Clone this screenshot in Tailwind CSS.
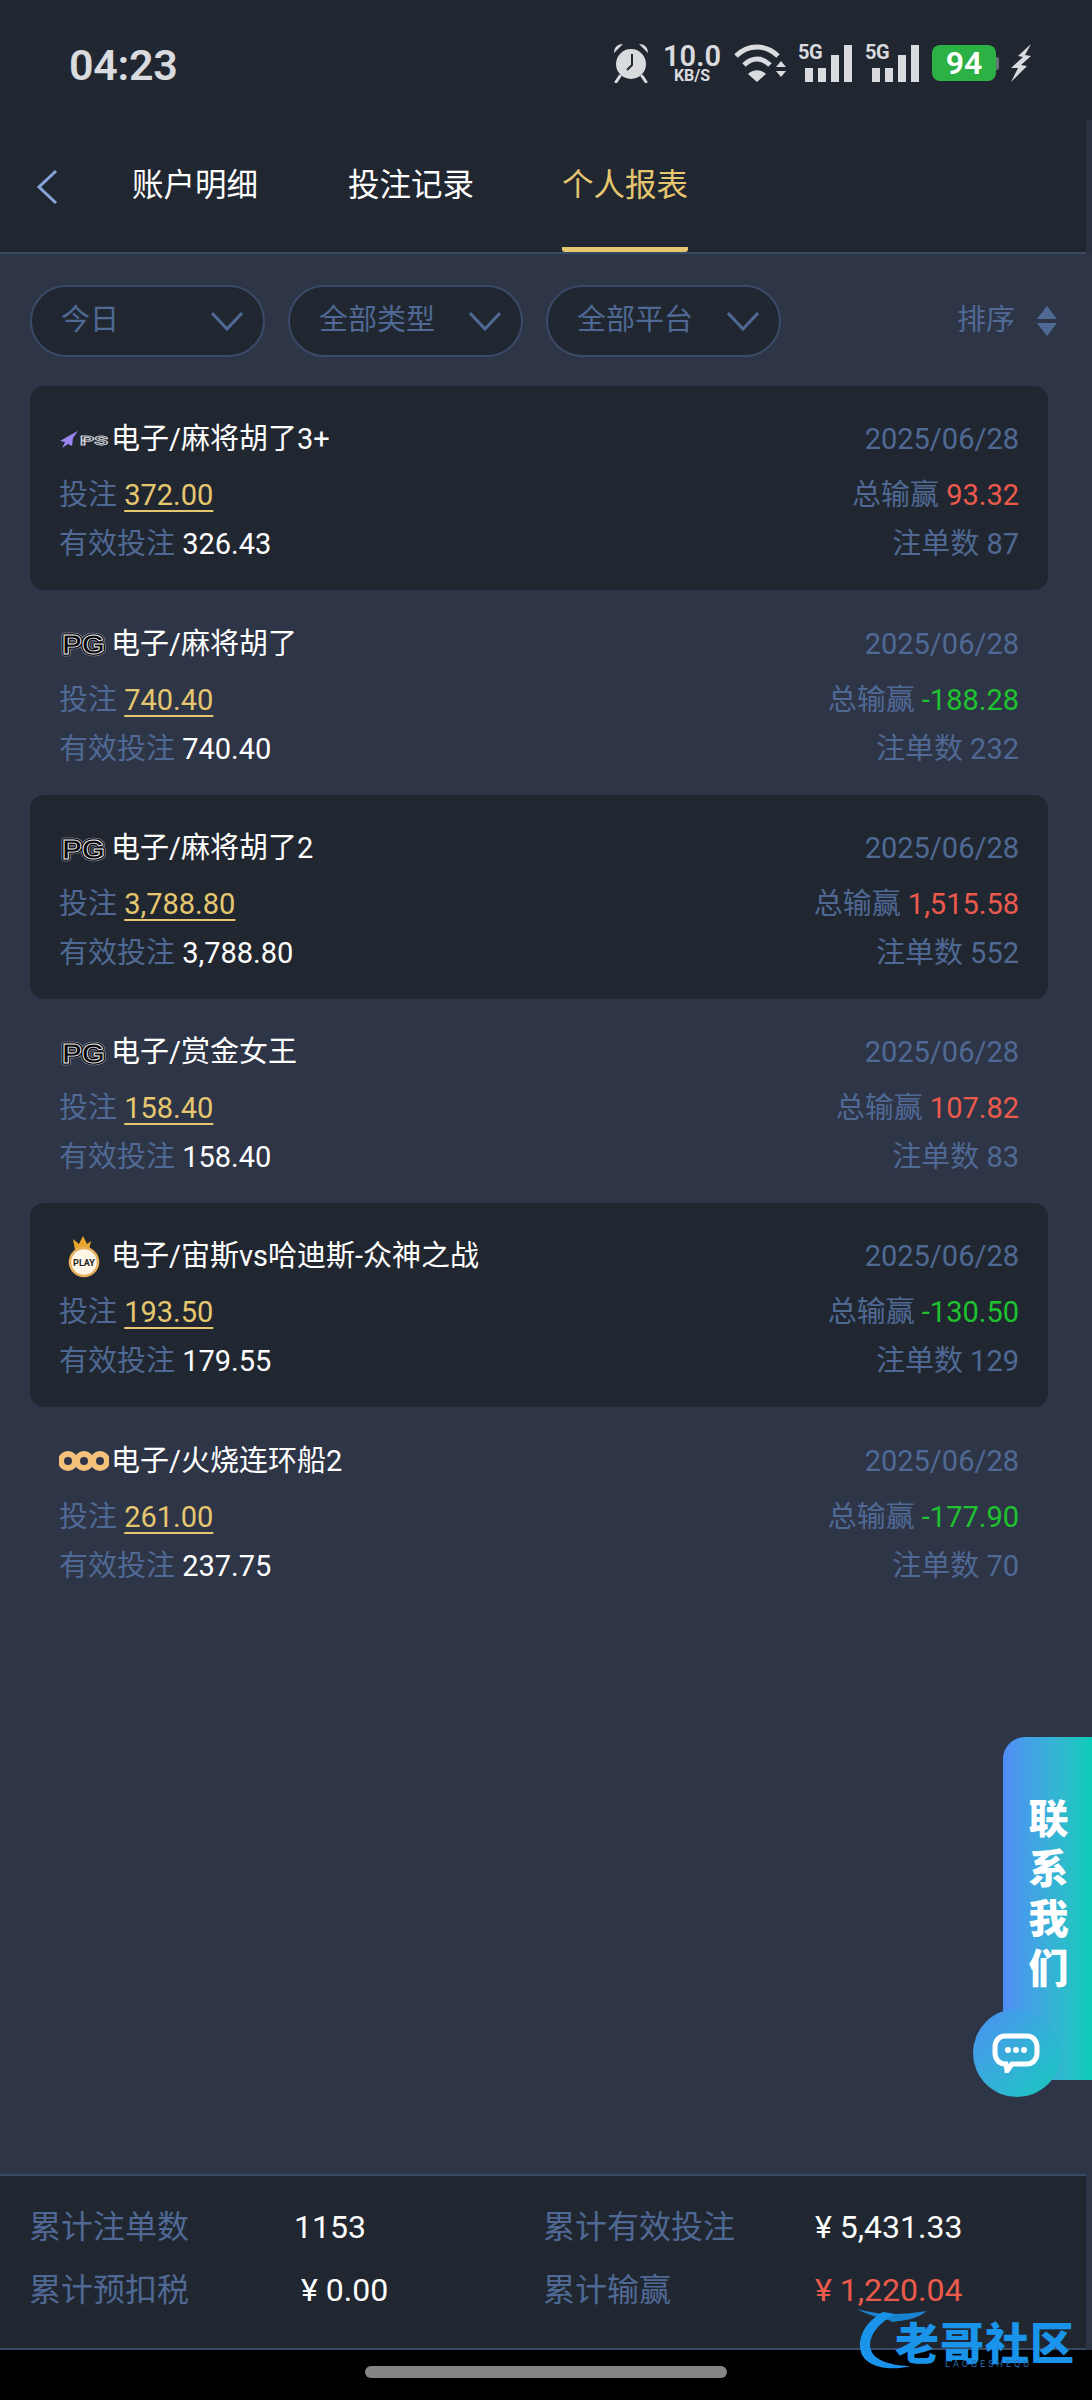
<!DOCTYPE html>
<html lang="zh-CN">
<head>
<meta charset="UTF-8">
<meta name="viewport" content="width=device-width, initial-scale=1.0">
<title>个人报表</title>
<script src="https://cdn.jsdelivr.net/npm/@tailwindcss/browser@4"></script>
</head>
<body class="bg-black">
<svg class="absolute w-0 h-0">
  <defs>
    <text id="pgmark" x="3" y="23" font-size="28" font-weight="700" font-family="Liberation Sans" textLength="43" lengthAdjust="spacingAndGlyphs">PG</text>
    <g id="pglogo">
      <use href="#pgmark" fill="none" stroke="#a4a8bc" stroke-width="4.5" stroke-linejoin="round"/>
      <use href="#pgmark" fill="none" stroke="#08080a" stroke-width="3.5" stroke-linejoin="round"/>
      <use href="#pgmark" fill="#08080a" stroke="#f4f4f8" stroke-width="0.9"/>
    </g>
  </defs>
</svg>
<div class="relative w-[1092px] h-[2400px] flex flex-col overflow-hidden bg-[#2e3547] font-[Roboto,'Noto_Sans_CJK_SC',sans-serif] text-white">

  <!-- status bar + tabs -->
  <header class="h-[254px] shrink-0 bg-[#2b3140]">
    <div class="h-[120px] bg-[#212731] flex items-start pt-[43px] pl-[69px] pr-[60px] text-[#d9dbde]">
      <span class="text-[43px] leading-[44px] font-semibold tracking-[-0.3px]">04:23</span>
      <div class="ml-auto flex items-center">
        <svg class="w-[38px] h-[40px]" viewBox="0 0 38 40" fill="#d9dbde">
          <path d="M2 10 C2 4 6 1 11 1 L3 9Z M36 10 C36 4 32 1 27 1 L35 9Z"/>
          <circle cx="19" cy="21" r="15"/>
          <path d="M8 33 L4 39 M30 33 L34 39" stroke="#d9dbde" stroke-width="3" stroke-linecap="round"/>
          <path d="M20 11 L20 22 L15 27" fill="none" stroke="#212732" stroke-width="2"/>
        </svg>
        <div class="ml-[14px] w-[56px] flex flex-col items-center">
          <span class="text-[29px] leading-[25px] font-semibold">10.0</span>
          <span class="text-[16px] leading-[14px] font-bold">KB/S</span>
        </div>
        <svg class="ml-[14px] w-[52px] h-[40px]" viewBox="0 0 52 40" fill="none" stroke="#d9dbde" stroke-width="5">
          <path d="M2 13 C14 1 32 1 44 13"/>
          <path d="M10 22 C18 14 28 14 36 22"/>
          <path d="M14 31 L23 39 L32 31 C27 26 19 26 14 31Z" fill="#d9dbde" stroke="none"/>
          <path d="M42 24 L47 18 L52 24Z M42 28 L52 28 L47 34Z" fill="#d9dbde" stroke="none"/>
        </svg>
        <div class="ml-[12px] relative w-[54px] h-[38px]">
          <span class="absolute left-0 top-[-2px] text-[20px] leading-[20px] font-bold tracking-[-0.5px]">5G</span>
          <div class="absolute left-[7px] bottom-0 flex items-end gap-[5px]">
            <i class="block w-[8px] h-[14px] bg-[#d9dbde]"></i><i class="block w-[8px] h-[14px] bg-[#d9dbde]"></i><i class="block w-[8px] h-[27px] bg-[#d9dbde]"></i><i class="block w-[8px] h-[37px] bg-[#d9dbde]"></i>
          </div>
        </div>
        <div class="ml-[13px] relative w-[54px] h-[38px]">
          <span class="absolute left-0 top-[-2px] text-[20px] leading-[20px] font-bold tracking-[-0.5px]">5G</span>
          <div class="absolute left-[7px] bottom-0 flex items-end gap-[5px]">
            <i class="block w-[8px] h-[14px] bg-[#d9dbde]"></i><i class="block w-[8px] h-[14px] bg-[#d9dbde]"></i><i class="block w-[8px] h-[27px] bg-[#d9dbde]"></i><i class="block w-[8px] h-[37px] bg-[#d9dbde]"></i>
          </div>
        </div>
        <div class="ml-[13px] flex items-center">
          <div class="w-[64px] h-[36px] rounded-[8px] bg-[#2bb144] flex items-center justify-center text-[32px] font-semibold text-white leading-none">94</div>
          <i class="block w-[3px] h-[13px] bg-[#6b7078] rounded-r-[2px]"></i>
        </div>
        <svg class="ml-[11px] w-[22px] h-[38px]" viewBox="0 0 22 38" fill="#d9dbde">
          <path d="M21 0 L8 12 L13 13 L1 24 L8 24 L1 38 L17 22 L11 21 L21 12 L15 11Z"/>
        </svg>
      </div>
    </div>
    <nav class="relative h-[134px] mr-[6px] bg-[#212731] border-b-2 border-[#394a66] flex items-start text-[31.5px] leading-[46px]">
      <svg class="absolute left-[35px] top-[49px] w-[24px] h-[36px]" viewBox="0 0 24 36" fill="none" stroke="#86a6dc" stroke-width="3">
        <path d="M21 2 L4 18 L21 34"/>
      </svg>
      <a class="ml-[132px] mt-[43px]">账户明细</a>
      <a class="ml-[90px] mt-[43px]">投注记录</a>
      <a class="ml-[88px] h-[132px] pt-[43px] text-[#e6c76f] border-b-[5px] border-[#e6c76f] rounded-b-[3px]">个人报表</a>
    </nav>
  </header>

  <!-- filters -->
  <div class="h-[132px] shrink-0 flex items-start pt-[31px] pl-[30px] pr-[30px]">
    <div class="w-[235px] h-[72px] rounded-full border-2 border-[#3b4a68] bg-[#212731] flex items-center justify-between pl-[29px] pr-[20px] text-[29px] text-[#4f6994]">
      <span>今日</span>
      <svg class="w-[32px] h-[20px]" viewBox="0 0 32 20" fill="none" stroke="#4f6994" stroke-width="3"><path d="M1 2 L16 18 L31 2"/></svg>
    </div>
    <div class="ml-[23px] w-[235px] h-[72px] rounded-full border-2 border-[#3b4a68] bg-[#212731] flex items-center justify-between pl-[29px] pr-[20px] text-[29px] text-[#4f6994]">
      <span>全部类型</span>
      <svg class="w-[32px] h-[20px]" viewBox="0 0 32 20" fill="none" stroke="#4f6994" stroke-width="3"><path d="M1 2 L16 18 L31 2"/></svg>
    </div>
    <div class="ml-[23px] w-[235px] h-[72px] rounded-full border-2 border-[#3b4a68] bg-[#212731] flex items-center justify-between pl-[29px] pr-[20px] text-[29px] text-[#4f6994]">
      <span>全部平台</span>
      <svg class="w-[32px] h-[20px]" viewBox="0 0 32 20" fill="none" stroke="#4f6994" stroke-width="3"><path d="M1 2 L16 18 L31 2"/></svg>
    </div>
    <div class="ml-auto h-[72px] flex items-center text-[29px] text-[#4f6994] pr-[5px]">
      <span>排序</span>
      <svg class="ml-[22px] w-[20px] h-[30px]" viewBox="0 0 20 30" fill="#4f6994"><path d="M10 0 L20 13 L0 13Z M0 17 L20 17 L10 30Z"/></svg>
    </div>
  </div>

  <!-- report list -->
  <main class="flex-1 pl-[30px] pr-[44px]">
    <article class="h-[204.25px] rounded-[14px] bg-[#212731] pt-[32px] px-[29px]">
      <div class="flex items-center justify-between h-[44px]">
        <div class="flex items-center text-[29px]">
          <svg class="w-[50px] h-[20px] mr-[2px]" viewBox="0 0 50 20">
            <path d="M19 1 L15 3 L1 11 L6 12 L3 18 L9 14 L13 16 L14 8Z" fill="#9a86f0"/>
            <text x="21" y="15" font-size="12" font-weight="700" fill="#212731" stroke="#c9ccd2" stroke-width="0.9" textLength="28" lengthAdjust="spacingAndGlyphs">PS</text>
          </svg>
          <span>电子/麻将胡了3+</span>
        </div>
        <span class="text-[29px] text-[#4f6994]">2025/06/28</span>
      </div>
      <div class="mt-[10px] flex justify-between h-[48px] items-center text-[29px]">
        <div><span class="text-[#4f6994]">投注</span> <span class="text-[#e6c76f] underline decoration-2 underline-offset-[5px]">372.00</span></div>
        <div><span class="text-[#4f6994]">总输赢</span> <span class="text-[#ec5a4c]">93.32</span></div>
      </div>
      <div class="mt-[1px] flex justify-between h-[48px] items-center text-[29px]">
        <div><span class="text-[#4f6994]">有效投注</span> <span>326.43</span></div>
        <div class="text-[#4f6994]">注单数 87</div>
      </div>
    </article>

    <article class="h-[204.25px] pt-[32px] px-[29px]">
      <div class="flex items-center justify-between h-[44px]">
        <div class="flex items-center text-[29px]">
          <svg class="w-[50px] h-[26px] mr-[2px]" viewBox="0 0 50 26"><use href="#pglogo"/></svg>
          <span>电子/麻将胡了</span>
        </div>
        <span class="text-[29px] text-[#4f6994]">2025/06/28</span>
      </div>
      <div class="mt-[10px] flex justify-between h-[48px] items-center text-[29px]">
        <div><span class="text-[#4f6994]">投注</span> <span class="text-[#e6c76f] underline decoration-2 underline-offset-[5px]">740.40</span></div>
        <div><span class="text-[#4f6994]">总输赢</span> <span class="text-[#1ec22f]">-188.28</span></div>
      </div>
      <div class="mt-[1px] flex justify-between h-[48px] items-center text-[29px]">
        <div><span class="text-[#4f6994]">有效投注</span> <span>740.40</span></div>
        <div class="text-[#4f6994]">注单数 232</div>
      </div>
    </article>

    <article class="h-[204.25px] rounded-[14px] bg-[#212731] pt-[32px] px-[29px]">
      <div class="flex items-center justify-between h-[44px]">
        <div class="flex items-center text-[29px]">
          <svg class="w-[50px] h-[26px] mr-[2px]" viewBox="0 0 50 26"><use href="#pglogo"/></svg>
          <span>电子/麻将胡了2</span>
        </div>
        <span class="text-[29px] text-[#4f6994]">2025/06/28</span>
      </div>
      <div class="mt-[10px] flex justify-between h-[48px] items-center text-[29px]">
        <div><span class="text-[#4f6994]">投注</span> <span class="text-[#e6c76f] underline decoration-2 underline-offset-[5px]">3,788.80</span></div>
        <div><span class="text-[#4f6994]">总输赢</span> <span class="text-[#ec5a4c]">1,515.58</span></div>
      </div>
      <div class="mt-[1px] flex justify-between h-[48px] items-center text-[29px]">
        <div><span class="text-[#4f6994]">有效投注</span> <span>3,788.80</span></div>
        <div class="text-[#4f6994]">注单数 552</div>
      </div>
    </article>

    <article class="h-[204.25px] pt-[32px] px-[29px]">
      <div class="flex items-center justify-between h-[44px]">
        <div class="flex items-center text-[29px]">
          <svg class="w-[50px] h-[26px] mr-[2px]" viewBox="0 0 50 26"><use href="#pglogo"/></svg>
          <span>电子/赏金女王</span>
        </div>
        <span class="text-[29px] text-[#4f6994]">2025/06/28</span>
      </div>
      <div class="mt-[10px] flex justify-between h-[48px] items-center text-[29px]">
        <div><span class="text-[#4f6994]">投注</span> <span class="text-[#e6c76f] underline decoration-2 underline-offset-[5px]">158.40</span></div>
        <div><span class="text-[#4f6994]">总输赢</span> <span class="text-[#ec5a4c]">107.82</span></div>
      </div>
      <div class="mt-[1px] flex justify-between h-[48px] items-center text-[29px]">
        <div><span class="text-[#4f6994]">有效投注</span> <span>158.40</span></div>
        <div class="text-[#4f6994]">注单数 83</div>
      </div>
    </article>

    <article class="h-[204.25px] rounded-[14px] bg-[#212731] pt-[32px] px-[29px]">
      <div class="flex items-center justify-between h-[44px]">
        <div class="flex items-center text-[29px]">
          <svg class="w-[50px] h-[42px] mr-[2px]" viewBox="0 0 50 42">
            <path d="M16 14 L14 3 L20 8 L24 0 L28 8 L32 5 L30 14Z" fill="#e9a52c"/>
            <circle cx="25" cy="26" r="14" fill="#fdf6e6" stroke="#e6b05c" stroke-width="2.5"/>
            <text x="25" y="30" font-size="9" font-weight="700" text-anchor="middle" fill="#222">PLAY</text>
          </svg>
          <span>电子/宙斯vs哈迪斯-众神之战</span>
        </div>
        <span class="text-[29px] text-[#4f6994]">2025/06/28</span>
      </div>
      <div class="mt-[10px] flex justify-between h-[48px] items-center text-[29px]">
        <div><span class="text-[#4f6994]">投注</span> <span class="text-[#e6c76f] underline decoration-2 underline-offset-[5px]">193.50</span></div>
        <div><span class="text-[#4f6994]">总输赢</span> <span class="text-[#1ec22f]">-130.50</span></div>
      </div>
      <div class="mt-[1px] flex justify-between h-[48px] items-center text-[29px]">
        <div><span class="text-[#4f6994]">有效投注</span> <span>179.55</span></div>
        <div class="text-[#4f6994]">注单数 129</div>
      </div>
    </article>

    <article class="h-[204.25px] pt-[32px] px-[29px]">
      <div class="flex items-center justify-between h-[44px]">
        <div class="flex items-center text-[29px]">
          <svg class="w-[50px] h-[24px] mr-[2px]" viewBox="0 0 50 24" fill="none" stroke="#f5c27c" stroke-width="6">
            <circle cx="9" cy="12" r="7"/><circle cx="25" cy="12" r="7"/><circle cx="41" cy="12" r="7"/>
          </svg>
          <span>电子/火烧连环船2</span>
        </div>
        <span class="text-[29px] text-[#4f6994]">2025/06/28</span>
      </div>
      <div class="mt-[10px] flex justify-between h-[48px] items-center text-[29px]">
        <div><span class="text-[#4f6994]">投注</span> <span class="text-[#e6c76f] underline decoration-2 underline-offset-[5px]">261.00</span></div>
        <div><span class="text-[#4f6994]">总输赢</span> <span class="text-[#1ec22f]">-177.90</span></div>
      </div>
      <div class="mt-[1px] flex justify-between h-[48px] items-center text-[29px]">
        <div><span class="text-[#4f6994]">有效投注</span> <span>237.75</span></div>
        <div class="text-[#4f6994]">注单数 70</div>
      </div>
    </article>
  </main>

  <!-- totals -->
  <footer class="h-[176px] shrink-0 mr-[6px] bg-[#212731] border-t-2 border-b-2 border-[#394a66] pt-[19px] pl-[29px] grid grid-cols-[265px_249px_272px_1fr] grid-rows-[63px_63px] items-center text-[32px]">
    <span class="text-[#4f6994]">累计注单数</span>
    <span class="text-[32px]">1153</span>
    <span class="text-[#4f6994]">累计有效投注</span>
    <span class="text-[32px]">¥ 5,431.33</span>
    <span class="text-[#4f6994]">累计预扣税</span>
    <span class="text-[32px] ml-[7px]">¥ 0.00</span>
    <span class="text-[#4f6994]">累计输赢</span>
    <span class="text-[32px] text-[#ec5a4c]">¥ 1,220.04</span>
  </footer>

  <!-- nav bar -->
  <div class="h-[50px] shrink-0 bg-black pt-[16px]">
    <div class="mx-auto w-[362px] h-[12px] rounded-full bg-[#858585]"></div>
  </div>

  <!-- contact us widget -->
  <div class="absolute left-[1003px] top-[1737px] w-[89px] h-[343px] rounded-tl-[22px] bg-gradient-to-r from-[#4f8cf5] to-[#08cdb8] flex flex-col items-center pt-[58px] text-[40px] leading-[50px] font-black pl-[2px]">
    <span>联</span><span>系</span><span>我</span><span>们</span>
  </div>
  <div class="absolute left-[973px] top-[2009px] w-[88px] h-[88px] rounded-full bg-gradient-to-br from-[#4a8ff2] to-[#0cc9bc] flex items-center justify-center">
    <svg class="w-[48px] h-[40px] mr-[3px]" viewBox="0 0 48 40">
      <path d="M13 3 H35 C41 3 45 8 45 14 V20 C45 26 41 31 35 31 H20 L15 38 L14 31 H13 C7 31 3 26 3 20 V14 C3 8 7 3 13 3Z" fill="none" stroke="#fff" stroke-width="5"/>
      <circle cx="16" cy="17" r="3" fill="#fff"/><circle cx="24" cy="17" r="3" fill="#fff"/><circle cx="32" cy="17" r="3" fill="#fff"/>
    </svg>
  </div>

  <!-- watermark -->
  <div class="absolute left-[855px] top-[2306px] w-[222px] h-[68px]">
    <svg class="absolute left-0 top-0 w-[110px] h-[68px]" viewBox="0 0 110 68" fill="none">
      <path d="M28 6 C10 16 2 32 6 46 C10 60 32 66 56 60 C40 60 20 56 16 44 C12 32 22 18 40 8Z" fill="#1a93ea"/>
      <path d="M2 3 C20 8 40 10 72 5 C60 14 50 14 38 16 C30 12 14 10 2 3Z" fill="#1a93ea" opacity="0.85"/>
    </svg>
    <span class="absolute left-[40px] top-[18px] text-[44px] leading-[34px] tracking-[1px] font-black text-[#1a93ea] font-['Noto_Sans_CJK_SC',sans-serif] whitespace-nowrap">老哥社区</span>
    <span class="absolute left-[90px] top-[53px] text-[9px] leading-[10px] tracking-[3px] text-[#2a6fb0] whitespace-nowrap">LAOGESHEQU</span>
  </div>
</div>
</body>
</html>
